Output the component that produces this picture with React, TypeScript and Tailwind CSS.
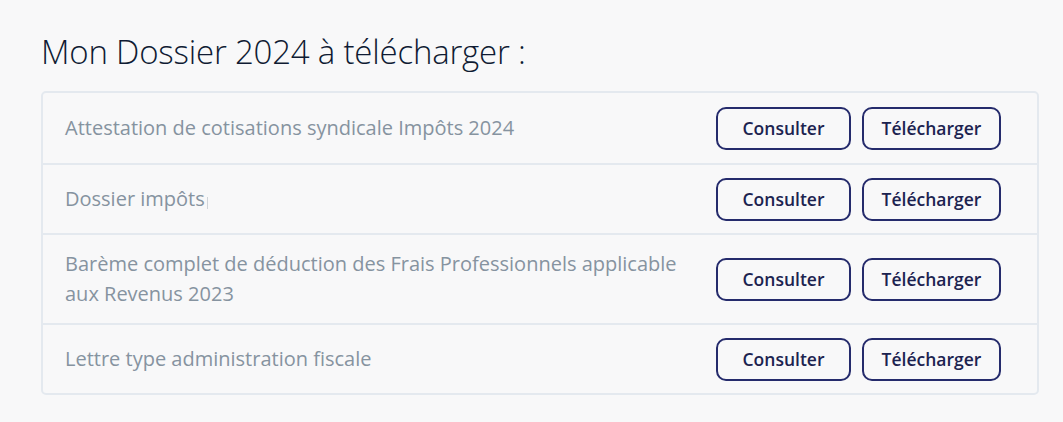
const docs = [
  { label: 'Attestation de cotisations syndicale Impôts 2024', h: 'min-h-[70px]' },
  { label: 'Dossier impôts', caret: true, h: 'min-h-[70px]' },
  {
    label: 'Barème complet de déduction des Frais Professionnels applicable aux Revenus 2023',
    h: 'min-h-[90px]',
  },
  { label: 'Lettre type administration fiscale', h: 'min-h-[70px]' },
];

function DocButton({ children, width }: { children: string; width: string }) {
  return (
    <button
      className={`h-[43px] ${width} rounded-[10px] border-2 border-[#252b6c] bg-transparent text-[17.5px] font-semibold text-[#1c2350]`}
    >
      {children}
    </button>
  );
}

export default function App() {
  return (
    <div className="min-h-[422px] bg-[#f8f8f9] px-[41px] pt-[30px] font-['Open_Sans',sans-serif]">
      <h1 className="text-[33px] font-light leading-[44px] tracking-[-0.2px] text-[#0f1b33]">
        Mon Dossier 2024 à télécharger :
      </h1>
      <div className="mt-[17px] w-[998px] rounded-[5px] border-2 border-[#e4e9ef]">
        {docs.map((doc, i) => (
          <div
            key={doc.label}
            className={`flex items-center justify-between py-[12px] pl-[22px] pr-[36px] ${
              i > 0 ? 'border-t-2 border-[#e4e9ef]' : ''
            } ${doc.h}`}
          >
            <p className="max-w-[630px] text-[20px] leading-[30px] text-[#8693a0]">
              {doc.label}
              {doc.caret && (
                <span className="ml-[2px] inline-block h-[12px] w-px translate-y-[3px] bg-[#d0d4d9]" />
              )}
            </p>
            <div className="flex shrink-0 gap-[11px]">
              <DocButton width="w-[135px]">Consulter</DocButton>
              <DocButton width="w-[139px]">Télécharger</DocButton>
            </div>
          </div>
        ))}
      </div>
    </div>
  );
}
